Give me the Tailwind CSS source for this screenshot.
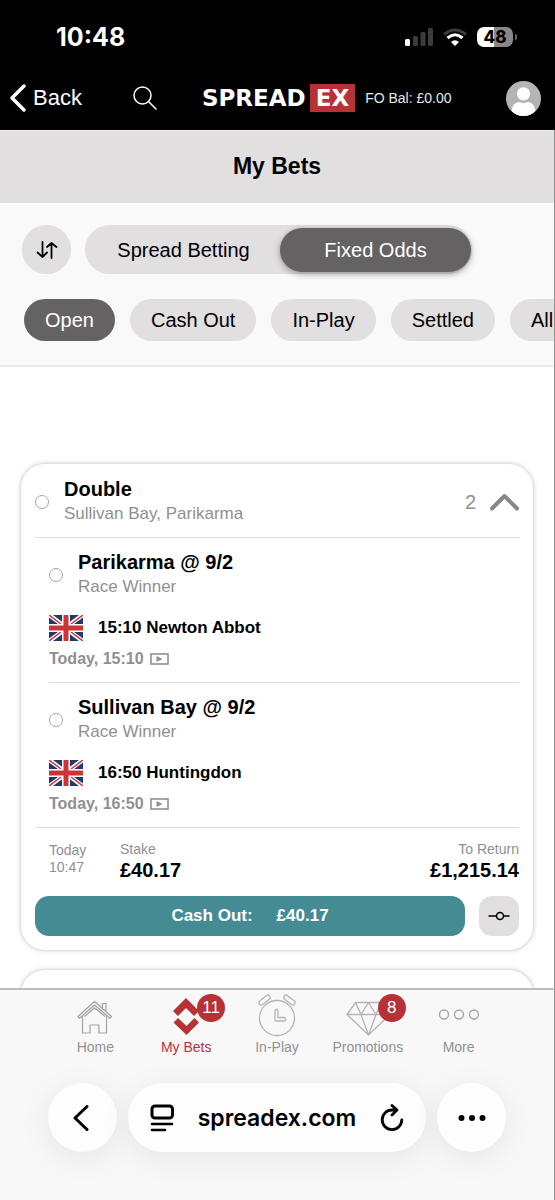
<!DOCTYPE html>
<html lang="en">
<head>
<meta charset="utf-8">
<meta name="viewport" content="width=device-width, initial-scale=1">
<title>My Bets</title>
<script src="https://cdn.jsdelivr.net/npm/@tailwindcss/browser@4"></script>
</head>
<body class="flex h-screen flex-col overflow-hidden bg-white font-['Liberation_Sans',Arial,sans-serif] text-black">

<svg class="hidden">
  <symbol id="uk" viewBox="0 0 34 26" preserveAspectRatio="none">
    <rect width="34" height="26" fill="#fff"/>
    <path d="M4 0H14V7.500ZM0 2.500V9H9ZM30 0H20V7.500ZM34 2.500V9H25ZM4 26H14V18.500ZM0 23.500V17H9ZM30 26H20V18.500ZM34 23.500V17H25Z" fill="#1f3a6b"/>
    <path d="M0 0L12 9M34 0L22 9M0 26L12 17M34 26L22 17" stroke="#d0383d" stroke-width="1.500"/>
    <path d="M17 0V26M0 13H34" stroke="#fff" stroke-width="8"/>
    <path d="M17 0V26M0 13H34" stroke="#cf3338" stroke-width="5"/>
  </symbol>
  <symbol id="video" viewBox="0 0 19 12">
    <rect x="1" y="1" width="17" height="10" fill="none" stroke="#8e9093" stroke-width="1.600"/>
    <path d="M6.500 3L12.500 6L6.500 9Z" fill="#8e9093"/>
  </symbol>
</svg>

<header class="flex-none bg-black text-white">
  <div class="flex h-[66px] items-center justify-between pt-2 pr-[38px] pl-[56px]">
    <time class="font-['Inter',sans-serif] text-[25px] font-bold leading-7">10:48</time>
    <div class="flex items-center gap-2.5">
      <svg class="h-5 w-7" viewBox="0 0 28 20">
        <rect x="0" y="12" width="5" height="7" rx="1.500" fill="#fff"/>
        <rect x="8" y="9" width="5" height="10" rx="1.500" fill="#3c3c3c"/>
        <rect x="15.500" y="5" width="5" height="14" rx="1.500" fill="#3c3c3c"/>
        <rect x="23" y="1" width="5" height="18" rx="1.500" fill="#3c3c3c"/>
      </svg>
      <svg class="h-5 w-6" viewBox="0 0 24 20" fill="none">
        <path d="M1 7.500Q12-1.500 23 7.500" stroke="#3c3c3c" stroke-width="3"/>
        <path d="M4.500 11Q12 4.500 19.500 11" stroke="#fff" stroke-width="3"/>
        <path d="M12 19L8 15Q12 11.500 16 15Z" fill="#fff"/>
      </svg>
      <div class="flex items-center gap-0.5">
        <span class="flex h-5 w-9 items-center justify-center rounded-[7px] bg-linear-to-r from-white from-48% to-[#888] to-48% font-['Inter',sans-serif] text-[17px] font-extrabold leading-5 text-black">48</span>
        <span class="h-1.5 w-[2px] rounded-r-full bg-[#666]"></span>
      </div>
    </div>
  </div>
  <div class="flex h-16 items-center pr-3.5 pl-2">
    <button type="button" class="flex items-center gap-[5px] text-[22px] leading-7">
      <svg class="h-7 w-5" viewBox="0 0 20 28" fill="none" stroke="#fff" stroke-width="3.500" stroke-linecap="round" stroke-linejoin="round"><path d="M16 2L4 14L16 26"/></svg>Back
    </button>
    <button type="button" aria-label="Search" class="ml-[51px]">
      <svg class="h-6 w-6" viewBox="0 0 24 24" fill="none" stroke="#fff" stroke-width="1.500" stroke-linecap="round"><circle cx="9.500" cy="9.500" r="8.500"/><path d="M15.500 15.500L23 23"/></svg>
    </button>
    <a href="#" class="ml-[45px] flex items-center gap-1 font-['DejaVu_Sans',sans-serif] text-[23px] font-bold leading-7">SPREAD<span class="bg-[#b73237] px-1.5">EX</span></a>
    <span class="ml-2.5 whitespace-nowrap text-[14px] text-[#e8e8e8]">FO Bal: £0.00</span>
    <button type="button" aria-label="Account" class="ml-auto">
      <svg class="h-[35px] w-[35px]" viewBox="0 0 34 34"><defs><clipPath id="av"><circle cx="17" cy="17" r="17"/></clipPath></defs><g clip-path="url(#av)"><rect width="34" height="34" fill="#b4b4b4"/><circle cx="17" cy="12.500" r="6.500" fill="#fff"/><path d="M5 34C5 24 9 20.500 13 20.500Q17 22.500 21 20.500C25 20.500 29 24 29 34Z" fill="#fff"/></g></svg>
    </button>
  </div>
</header>

<main class="flex min-h-0 flex-1 flex-col overflow-hidden border-r border-[#8f8f8f]">
  <h1 class="flex h-[73px] flex-none items-center justify-center border-t border-[#eee] bg-[#e1dfe0] pb-0.5 text-[23px] font-bold leading-7">My Bets</h1>

  <section class="flex-none border-b-2 border-[#e8e8e8] bg-[#f9f9f9] pt-[22px] pb-6">
    <div class="flex gap-3.5 pl-[22px]">
      <button type="button" aria-label="Sort" class="flex h-[49px] w-[49px] items-center justify-center rounded-full bg-[#e1dfe0]">
        <svg class="h-[18px] w-[22px]" viewBox="0 0 22 18" fill="none" stroke="#000" stroke-width="1.800" stroke-linecap="round" stroke-linejoin="round"><path d="M6.500 1V16M1.500 11.500L6.500 16L11 11.500M15.500 17V2M11 6L15.500 2L20.500 6"/></svg>
      </button>
      <div class="flex h-[49px] items-center rounded-full bg-[#e1dfe0] pr-px text-[20px]">
        <button type="button" class="w-[195px] pl-0.5">Spread Betting</button>
        <button type="button" class="h-11 w-[191px] rounded-full bg-[#646263] text-white shadow-[0_2px_6px_rgba(0,0,0,0.35)]">Fixed Odds</button>
      </div>
    </div>
    <div class="mt-[25px] flex gap-[15px] overflow-hidden pl-6 text-[20px]">
      <button type="button" class="h-[42px] flex-none rounded-full bg-[#646263] px-[21px] text-white">Open</button>
      <button type="button" class="h-[42px] flex-none rounded-full bg-[#e1dfe0] px-[21px]">Cash Out</button>
      <button type="button" class="h-[42px] flex-none rounded-full bg-[#e1dfe0] px-[21px]">In-Play</button>
      <button type="button" class="h-[42px] flex-none rounded-full bg-[#e1dfe0] px-[21px]">Settled</button>
      <button type="button" class="h-[42px] flex-none rounded-full bg-[#e1dfe0] px-[21px]">All</button>
    </div>
  </section>

  <section class="flex flex-none flex-col gap-5 px-[21px] pt-[97px]">
    <article class="rounded-[24px] bg-white px-3.5 pt-[13px] pb-3.5 shadow-[0_0_5px_rgba(0,0,0,0.28)]">
      <div class="flex items-center border-b border-[#dcdcdc] pb-[11px]">
        <span class="h-3.5 w-3.5 rounded-full border border-[#a5a5a5]"></span>
        <div class="ml-[15px]">
          <h2 class="text-[20px] font-bold leading-6">Double</h2>
          <p class="text-[17px] leading-[25px] text-[#8e9093]">Sullivan Bay, Parikarma</p>
        </div>
        <span class="ml-auto text-[20px] text-[#8e9093]">2</span>
        <button type="button" aria-label="Collapse" class="ml-3.5">
          <svg class="h-[18px] w-[29px]" viewBox="0 0 29 18" fill="none" stroke="#858789" stroke-width="4" stroke-linecap="round" stroke-linejoin="round"><path d="M2 15.500L14.500 3L27 15.500"/></svg>
        </button>
      </div>

      <div class="ml-3.5 border-b border-[#dcdcdc] pt-3 pb-[13px]">
        <div class="flex items-center gap-[15px]">
          <span class="h-3.5 w-3.5 rounded-full border border-[#a5a5a5]"></span>
          <div>
            <h3 class="text-[20px] font-bold leading-6">Parikarma @ 9/2</h3>
            <p class="text-[17px] leading-[25px] text-[#8e9093]">Race Winner</p>
          </div>
        </div>
        <div class="mt-4 flex items-center gap-[15px]">
          <svg class="h-[26px] w-[34px]"><use href="#uk"/></svg>
          <p class="text-[17px] font-bold leading-[26px]">15:10 Newton Abbot</p>
        </div>
        <div class="mt-2 flex items-center gap-1.5 text-[16px] font-bold leading-5 text-[#8e9093]">Today, 15:10 <svg class="h-3 w-[19px]"><use href="#video"/></svg></div>
      </div>

      <div class="ml-3.5 pt-3 pb-[13px]">
        <div class="flex items-center gap-[15px]">
          <span class="h-3.5 w-3.5 rounded-full border border-[#a5a5a5]"></span>
          <div>
            <h3 class="text-[20px] font-bold leading-6">Sullivan Bay @ 9/2</h3>
            <p class="text-[17px] leading-[25px] text-[#8e9093]">Race Winner</p>
          </div>
        </div>
        <div class="mt-4 flex items-center gap-[15px]">
          <svg class="h-[26px] w-[34px]"><use href="#uk"/></svg>
          <p class="text-[17px] font-bold leading-[26px]">16:50 Huntingdon</p>
        </div>
        <div class="mt-2 flex items-center gap-1.5 text-[16px] font-bold leading-5 text-[#8e9093]">Today, 16:50 <svg class="h-3 w-[19px]"><use href="#video"/></svg></div>
      </div>

      <div class="flex items-start border-t border-[#dcdcdc] pt-3 pb-3.5 text-[14px] text-[#8e9093]">
        <p class="w-[85px] pl-3.5 pt-0.5 leading-[17px]">Today<br>10:47</p>
        <div>
          <p class="leading-[18px]">Stake</p>
          <p class="text-[20px] font-bold leading-6 text-black">£40.17</p>
        </div>
        <div class="ml-auto text-right">
          <p class="leading-[18px]">To Return</p>
          <p class="text-[20px] font-bold leading-6 text-black">£1,215.14</p>
        </div>
      </div>

      <div class="flex gap-3.5">
        <button type="button" class="flex h-10 flex-1 items-center justify-center gap-6 rounded-[14px] bg-[#448b94] text-[17px] font-bold text-white"><span>Cash Out:</span><span>£40.17</span></button>
        <button type="button" aria-label="Partial cash out" class="flex h-10 w-10 items-center justify-center rounded-[13px] bg-[#e1dfe0]">
          <svg class="h-2.5 w-[22px]" viewBox="0 0 22 10" fill="none" stroke="#000" stroke-width="1.500" stroke-linecap="round"><path d="M1 5H8M16 5H21"/><circle cx="12" cy="5" r="3.500"/></svg>
        </button>
      </div>
    </article>
    <article class="h-40 rounded-[24px] bg-white shadow-[0_0_5px_rgba(0,0,0,0.28)]"></article>
  </section>
</main>

<footer class="flex-none border-t-2 border-r border-t-[#bdbdbd] border-r-[#8f8f8f] bg-[#f8f8f8] pb-12">
  <nav class="grid grid-cols-5 px-[50px] text-[14px] leading-5 text-[#909295]">
    <a href="#" class="flex flex-col items-center">
      <svg class="h-[47px] w-[50px]" viewBox="0 0 50 47" fill="none" stroke="#a2a3a5" stroke-width="1.200" stroke-linejoin="round"><path d="M24.500 11.500L41.500 26.500L40 28.300L24.500 15L9.500 28.300L8 26.500Z"/><path d="M12.500 26V43H20V35H29V43H36.500V26"/><path d="M14.500 26.500L24.500 17.800L35 26.500M32.500 18V13.500H36V21.500"/></svg>
      Home
    </a>
    <a href="#" class="relative flex flex-col items-center text-[#b73237]">
      <svg class="h-[47px] w-[50px]" viewBox="0 0 50 47" fill="#b73237"><path d="M25 8L38 21L33 26L25 18L17 26L12 21Z"/><path d="M25.500 45L38 32.500L33.500 28L25.500 36L17 28L12.500 32.500Z"/></svg>
      My Bets
      <span class="absolute top-1 left-1/2 ml-[11px] flex h-7 w-7 items-center justify-center rounded-full bg-[#b73237] text-[17px] text-white">11</span>
    </a>
    <a href="#" class="flex flex-col items-center">
      <svg class="h-[47px] w-[50px]" viewBox="0 0 50 47" fill="none" stroke="#b3b4b6" stroke-width="1.300" stroke-linejoin="round"><circle cx="25" cy="28" r="17.500"/><rect x="6" y="7.800" width="13" height="4.600" rx="2.300" transform="rotate(-38 12.500 10)"/><rect x="31" y="7.800" width="13" height="4.600" rx="2.300" transform="rotate(38 37.500 10)"/><path d="M23 20.500Q24.600 18 26 20.500V27.500H32.500Q35 29.200 32.500 31H24Q23 31 23 30Z"/></svg>
      In-Play
    </a>
    <a href="#" class="relative flex flex-col items-center">
      <svg class="h-[47px] w-[50px]" viewBox="0 0 50 47" fill="none" stroke="#b3b4b6" stroke-width="1.300" stroke-linejoin="round"><path d="M12.500 12.500H38.500L47 24.500L25.500 45L4 24.500ZM4 24.500H47M12.500 12.500L18 24.500L25.500 12.500L33 24.500L38.500 12.500M18 24.500L25.500 45L33 24.500"/></svg>
      Promotions
      <span class="absolute top-1 left-1/2 ml-2.5 flex h-7 w-7 items-center justify-center rounded-full bg-[#b73237] text-[17px] text-white">8</span>
    </a>
    <a href="#" class="flex flex-col items-center">
      <svg class="h-[47px] w-[50px]" viewBox="0 0 50 47" fill="none" stroke="#a2a3a5" stroke-width="1.300"><circle cx="10" cy="24.500" r="4.500"/><circle cx="25" cy="24.500" r="4.500"/><circle cx="40" cy="24.500" r="4.500"/></svg>
      More
    </a>
  </nav>
  <div class="mt-[26px] flex gap-[11px] px-12">
    <button type="button" aria-label="Previous page" class="flex h-[69px] w-[69px] flex-none items-center justify-center rounded-full bg-[#fdfdfd] shadow-[0_6px_30px_rgba(0,0,0,0.08)]">
      <svg class="h-[26px] w-5" viewBox="0 0 20 26" fill="none" stroke="#000" stroke-width="3" stroke-linecap="round" stroke-linejoin="round"><path d="M14 1.500L2 13L14 24.500"/></svg>
    </button>
    <div class="flex h-[69px] flex-1 items-center justify-between rounded-full bg-[#fdfdfd] px-[22px] shadow-[0_6px_30px_rgba(0,0,0,0.08)]">
      <button type="button" aria-label="Page menu">
        <svg class="h-7 w-6" viewBox="0 0 24 28" fill="none" stroke="#000" stroke-width="3" stroke-linecap="round"><rect x="2" y="2" width="20.500" height="12" rx="3"/><path d="M2 20H22M2 26H15" stroke-width="2.600"/></svg>
      </button>
      <button type="button" class="font-['Inter',sans-serif] text-[23px] font-semibold leading-7">spreadex.com</button>
      <button type="button" aria-label="Reload">
        <svg class="h-7 w-6" viewBox="0 0 24 28" fill="none" stroke="#000" stroke-width="2.800" stroke-linecap="round" stroke-linejoin="round"><path d="M16 6H12A9.800 9.800 0 1 0 21.800 15.800M12 1.500L17 6L12 11"/></svg>
      </button>
    </div>
    <button type="button" aria-label="More options" class="flex h-[69px] w-[69px] flex-none items-center justify-center rounded-full bg-[#fdfdfd] shadow-[0_6px_30px_rgba(0,0,0,0.08)]">
      <svg class="h-2 w-7" viewBox="0 0 28 8"><circle cx="3.500" cy="4" r="3"/><circle cx="14" cy="4" r="3"/><circle cx="24.500" cy="4" r="3"/></svg>
    </button>
  </div>
</footer>
</body>
</html>
